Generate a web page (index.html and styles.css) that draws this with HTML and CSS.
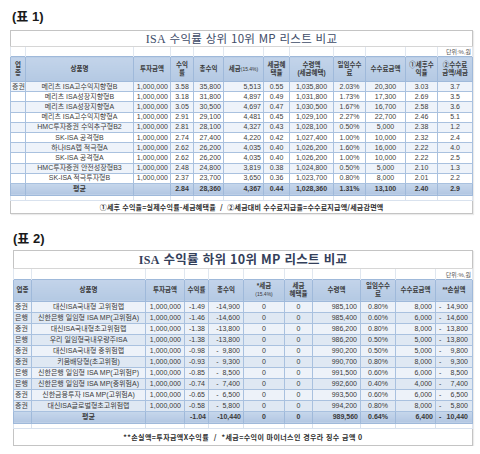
FILE: index.html
```html
<!DOCTYPE html>
<html lang="ko">
<head>
<meta charset="utf-8">
<link rel="stylesheet" href="styles.css">
</head>
<body>
<div class="page">
  <div class="caption">(표 1)</div>
  <table class="t t1">
    <colgroup>
      <col style="width:15px"><col style="width:108px"><col style="width:37px"><col style="width:23px"><col style="width:30px"><col style="width:40px"><col style="width:26px"><col style="width:44px"><col style="width:32px"><col style="width:40px"><col style="width:32px"><col style="width:35px">
    </colgroup>
    <tr class="title"><td colspan="12"><span class="lat">ISA</span> 수익률 상위 10위 MP 리스트 비교</td></tr>
    <tr class="unit"><td></td><td></td><td></td><td></td><td></td><td></td><td></td><td></td><td></td><td></td><td></td><td class="u">단위:%,원</td></tr>
    <tr class="head">
      <td>업<br>종</td><td>상품명</td><td>투자금액</td><td>수익<br>률</td><td>총수익</td><td>세금<small>(15.4%)</small></td><td>세금혜<br>택율</td><td>수령액<br>(세금혜택)</td><td>일임수수<br>료</td><td>수수료금액</td><td>①세후수<br>익율</td><td>②수수료<br>금액/세금</td>
    </tr>
    <tr class="d"><td class="l">증권</td><td class="c">메리츠 ISA고수익지향형B</td><td class="r">1,000,000</td><td class="c">3.58</td><td class="r">35,800</td><td class="r">5,513</td><td class="c">0.55</td><td class="c">1,035,800</td><td class="c">2.03%</td><td class="c">20,300</td><td class="c">3.03</td><td class="c">3.7</td></tr>
    <tr class="d"><td class="l"></td><td class="c">메리츠 ISA성장지향형B</td><td class="r">1,000,000</td><td class="c">3.18</td><td class="r">31,800</td><td class="r">4,897</td><td class="c">0.49</td><td class="c">1,031,800</td><td class="c">1.73%</td><td class="c">17,300</td><td class="c">2.69</td><td class="c">3.5</td></tr>
    <tr class="d"><td class="l"></td><td class="c">메리츠 ISA성장지향형A</td><td class="r">1,000,000</td><td class="c">3.05</td><td class="r">30,500</td><td class="r">4,697</td><td class="c">0.47</td><td class="c">1,030,500</td><td class="c">1.67%</td><td class="c">16,700</td><td class="c">2.58</td><td class="c">3.6</td></tr>
    <tr class="d"><td class="l"></td><td class="c">메리츠 ISA고수익지향형A</td><td class="r">1,000,000</td><td class="c">2.91</td><td class="r">29,100</td><td class="r">4,481</td><td class="c">0.45</td><td class="c">1,029,100</td><td class="c">2.27%</td><td class="c">22,700</td><td class="c">2.46</td><td class="c">5.1</td></tr>
    <tr class="d"><td class="l"></td><td class="c">HMC투자증권 수익추구형B2</td><td class="r">1,000,000</td><td class="c">2.81</td><td class="r">28,100</td><td class="r">4,327</td><td class="c">0.43</td><td class="c">1,028,100</td><td class="c">0.50%</td><td class="c">5,000</td><td class="c">2.38</td><td class="c">1.2</td></tr>
    <tr class="d"><td class="l"></td><td class="c">SK-ISA 공격형B</td><td class="r">1,000,000</td><td class="c">2.74</td><td class="r">27,400</td><td class="r">4,220</td><td class="c">0.42</td><td class="c">1,027,400</td><td class="c">1.00%</td><td class="c">10,000</td><td class="c">2.32</td><td class="c">2.4</td></tr>
    <tr class="d"><td class="l"></td><td class="c">하나ISA랩 적극형A</td><td class="r">1,000,000</td><td class="c">2.62</td><td class="r">26,200</td><td class="r">4,035</td><td class="c">0.40</td><td class="c">1,026,200</td><td class="c">1.60%</td><td class="c">16,000</td><td class="c">2.22</td><td class="c">4.0</td></tr>
    <tr class="d"><td class="l"></td><td class="c">SK-ISA 공격형A</td><td class="r">1,000,000</td><td class="c">2.62</td><td class="r">26,200</td><td class="r">4,035</td><td class="c">0.40</td><td class="c">1,026,200</td><td class="c">1.00%</td><td class="c">10,000</td><td class="c">2.22</td><td class="c">2.5</td></tr>
    <tr class="d"><td class="l"></td><td class="c">HMC투자증권 안전성장형B3</td><td class="r">1,000,000</td><td class="c">2.48</td><td class="r">24,800</td><td class="r">3,819</td><td class="c">0.38</td><td class="c">1,024,800</td><td class="c">0.50%</td><td class="c">5,000</td><td class="c">2.10</td><td class="c">1.3</td></tr>
    <tr class="d"><td class="l"></td><td class="c">SK-ISA 적극투자형B</td><td class="r">1,000,000</td><td class="c">2.37</td><td class="r">23,700</td><td class="r">3,650</td><td class="c">0.36</td><td class="c">1,023,700</td><td class="c">0.80%</td><td class="c">8,000</td><td class="c">2.01</td><td class="c">2.2</td></tr>
    <tr class="avg"><td></td><td class="c">평균</td><td></td><td class="c">2.84</td><td class="r">28,360</td><td class="r">4,367</td><td class="c">0.44</td><td class="c">1,028,360</td><td class="c">1.31%</td><td class="c">13,100</td><td class="c">2.40</td><td class="c">2.9</td></tr>
    <tr class="gap"><td></td><td></td><td></td><td></td><td></td><td></td><td></td><td></td><td></td><td></td><td></td><td></td></tr>
    <tr class="foot"><td colspan="12">①세후 수익율=실제수익률-세금혜택율 &nbsp;/ &nbsp;②세금대비 수수료지급율=수수료지급액/세금감면액</td></tr>
  </table>

  <div class="caption c2">(표 2)</div>
  <table class="t t2">
    <colgroup>
      <col style="width:18px"><col style="width:114px"><col style="width:39px"><col style="width:24px"><col style="width:35px"><col style="width:41px"><col style="width:28px"><col style="width:48px"><col style="width:35px"><col style="width:40px"><col style="width:37px">
    </colgroup>
    <tr class="title"><td colspan="11"><span class="lat">ISA</span> 수익률 하위 10위 MP 리스트 비교</td></tr>
    <tr class="unit"><td></td><td></td><td></td><td></td><td></td><td></td><td></td><td></td><td></td><td></td><td class="u">단위:%,원</td></tr>
    <tr class="head">
      <td>업종</td><td>상품명</td><td>투자금액</td><td>수익률</td><td>총수익</td><td>*세금<br><small>(15.4%)</small></td><td>세금<br>혜택율</td><td>수령액</td><td>일임수수<br>료</td><td>수수료금액</td><td>**손실액</td>
    </tr>
    <tr class="d"><td class="l">증권</td><td class="c">대신ISA국내형 고위험랩</td><td class="r">1,000,000</td><td class="r">-1.49</td><td class="r">-14,900</td><td class="c">0</td><td class="c">0</td><td class="r">985,100</td><td class="c">0.80%</td><td class="r">8,000</td><td><div class="acc"><span>-</span><span>14,900</span></div></td></tr>
    <tr class="d"><td class="l">은행</td><td class="c">신한은행 일임형 ISA MP(고위험A)</td><td class="r">1,000,000</td><td class="r">-1.46</td><td class="r">-14,600</td><td class="c">0</td><td class="c">0</td><td class="r">985,400</td><td class="c">0.60%</td><td class="r">6,000</td><td><div class="acc"><span>-</span><span>14,600</span></div></td></tr>
    <tr class="d"><td class="l">증권</td><td class="c">대신ISA국내형초고위험랩</td><td class="r">1,000,000</td><td class="r">-1.38</td><td class="r">-13,800</td><td class="c">0</td><td class="c">0</td><td class="r">986,200</td><td class="c">0.80%</td><td class="r">8,000</td><td><div class="acc"><span>-</span><span>13,800</span></div></td></tr>
    <tr class="d"><td class="l">은행</td><td class="c">우리 일임형국내우량주ISA</td><td class="r">1,000,000</td><td class="r">-1.38</td><td class="r">-13,800</td><td class="c">0</td><td class="c">0</td><td class="r">986,200</td><td class="c">0.50%</td><td class="r">5,000</td><td><div class="acc"><span>-</span><span>13,800</span></div></td></tr>
    <tr class="d"><td class="l">증권</td><td class="c">대신ISA국내형 중위험랩</td><td class="r">1,000,000</td><td class="r">-0.98</td><td class="r">- &nbsp;9,800</td><td class="c">0</td><td class="c">0</td><td class="r">990,200</td><td class="c">0.50%</td><td class="r">5,000</td><td><div class="acc"><span>-</span><span>9,800</span></div></td></tr>
    <tr class="d"><td class="l">증권</td><td class="c">키움배당형(초고위험)</td><td class="r">1,000,000</td><td class="r">-0.93</td><td class="r">- &nbsp;9,300</td><td class="c">0</td><td class="c">0</td><td class="r">990,700</td><td class="c">0.80%</td><td class="r">8,000</td><td><div class="acc"><span>-</span><span>9,300</span></div></td></tr>
    <tr class="d"><td class="l">은행</td><td class="c">신한은행 일임형 ISA MP(고위험P)</td><td class="r">1,000,000</td><td class="r">-0.85</td><td class="r">- &nbsp;8,500</td><td class="c">0</td><td class="c">0</td><td class="r">991,500</td><td class="c">0.60%</td><td class="r">6,000</td><td><div class="acc"><span>-</span><span>8,500</span></div></td></tr>
    <tr class="d"><td class="l">은행</td><td class="c">신한은행 일임형 ISA MP(중위험A)</td><td class="r">1,000,000</td><td class="r">-0.74</td><td class="r">- &nbsp;7,400</td><td class="c">0</td><td class="c">0</td><td class="r">992,600</td><td class="c">0.40%</td><td class="r">4,000</td><td><div class="acc"><span>-</span><span>7,400</span></div></td></tr>
    <tr class="d"><td class="l">증권</td><td class="c">신한금융투자 ISA MP(고위험A)</td><td class="r">1,000,000</td><td class="r">-0.65</td><td class="r">- &nbsp;6,500</td><td class="c">0</td><td class="c">0</td><td class="r">993,500</td><td class="c">0.60%</td><td class="r">6,000</td><td><div class="acc"><span>-</span><span>6,500</span></div></td></tr>
    <tr class="d"><td class="l">증권</td><td class="c">대신ISA글로벌형초고위험랩</td><td class="r">1,000,000</td><td class="r">-0.58</td><td class="r">- &nbsp;5,800</td><td class="c">0</td><td class="c">0</td><td class="r">994,200</td><td class="c">0.80%</td><td class="r">8,000</td><td><div class="acc"><span>-</span><span>5,800</span></div></td></tr>
    <tr class="avg"><td></td><td class="c">평균</td><td></td><td class="r">-1.04</td><td class="r">-10,440</td><td class="c">0</td><td class="c">0</td><td class="r">989,560</td><td class="c">0.64%</td><td class="r">6,400</td><td><div class="acc"><span>-</span><span>10,440</span></div></td></tr>
    <tr class="gap"><td></td><td></td><td></td><td></td><td></td><td></td><td></td><td></td><td></td><td></td><td></td></tr>
    <tr class="foot"><td colspan="11">**손실액=투자금액X수익률 &nbsp;/ &nbsp;*세금=수익이 마이너스인 경우라 징수 금액 0</td></tr>
  </table>
</div>
</body>
</html>
```

FILE: styles.css
```css
* { box-sizing: border-box; }

body {
  margin: 0;
  background: #ffffff;
  font-family: "Liberation Sans", "Noto Sans CJK KR", sans-serif;
  color: #404040;
}

.page {
  padding: 9px 8px 0 10px;
}

.caption {
  font-family: "Liberation Sans", "Noto Sans CJK KR", sans-serif;
  font-weight: bold;
  font-size: 13px;
  line-height: 16px;
  color: #1a1a1a;
  margin: 0 0 5px 2px;
}

.caption.c2 {
  margin-top: 17px;
  margin-bottom: 3px;
  margin-left: 3px;
}

.t {
  border-collapse: collapse;
  table-layout: fixed;
  border: 1px solid #c4c4c4;
  font-size: 7px;
  line-height: 8px;
  box-shadow: 1px 1px 1px rgba(0, 0, 0, 0.08);
}

.t1 { width: 462px; }
.t2 { width: 459px; margin-left: 3px; }

.t td {
  padding: 0 2px;
  border: 1px solid #a9c1df;
  white-space: nowrap;
  overflow: hidden;
  vertical-align: middle;
}

.t .l { text-align: left; padding-left: 1px; }
.t .c { text-align: center; }
.t .r { text-align: right; }

/* title row */
.t .title td {
  border: none;
  border-bottom: 1px solid #d6d6d6;
  text-align: center;
  font-family: "Noto Sans CJK KR", sans-serif;
  font-size: 11.5px;
  color: #3e4c68;
  letter-spacing: 0.3px;
}
.t .title .lat { font-family: "Liberation Serif", serif; font-size: 12px; }
.t1 .title td { height: 15px; line-height: 14px; }
.t2 .title td { height: 17px; line-height: 16px; font-weight: bold; font-size: 12.5px; color: #34405a; }

/* unit row */
.t .unit td {
  border-top: none;
  border-bottom: none;
  border-left: 1px solid #e0e7f0;
  border-right: 1px solid #e0e7f0;
  font-size: 6px;
  line-height: 7px;
  text-align: right;
  color: #555555;
  padding: 0 1px;
  vertical-align: bottom;
}
.t1 .unit td { height: 10px; }
.t2 .unit td { height: 11px; }

/* header row */
.t .head td {
  background: linear-gradient(#c3d4ea, #b4c9e3);
  font-weight: bold;
  font-size: 6.5px;
  line-height: 8px;
  text-align: center;
  color: #3a3a3a;
  padding: 0 1px;
  border-color: #9fb9da;
}
.t .head small { font-size: 5px; font-weight: normal; }
.t1 .head td { height: 25px; }
.t2 .head td { height: 22px; }

/* data rows */
.t1 .d td { height: 10.2px; background: #ffffff; }
.t1 .d:nth-child(even) td { background: #eef3fa; }
.t2 .d td { height: 11px; background: #dfe8f3; color: #3a3a3a; }
.t2 .d:nth-child(even) td { background: #edf2f9; }

.t2 .d td.r { padding-right: 3px; }

.acc {
  display: flex;
  justify-content: space-between;
  padding: 0 2px 0 1px;
}

/* average row */
.t .avg td {
  background: linear-gradient(#c7d7ec, #b2c7e2);
  font-weight: bold;
  color: #3a3a3a;
  border-color: #9fb9da;
}
.t1 .avg td { height: 12px; }
.t2 .avg td { height: 12px; }

/* gap row */
.t .gap td {
  height: 5px;
  border-top: none;
  border-color: #d9e2ee;
  background: #ffffff;
}

/* footer row */
.t .foot td {
  text-align: center;
  font-family: "Noto Sans CJK KR", sans-serif;
  font-weight: bold;
  font-size: 7px;
  color: #2e2e2e;
  border-left: none;
  border-right: none;
  border-bottom: none;
  border-top: 1px solid #d3dbe6;
  background: #ffffff;
}
.t1 .foot td { height: 13px; line-height: 12px; letter-spacing: 0.2px; }
.t2 .foot td { height: 17px; line-height: 16px; letter-spacing: 0.4px; }
```
